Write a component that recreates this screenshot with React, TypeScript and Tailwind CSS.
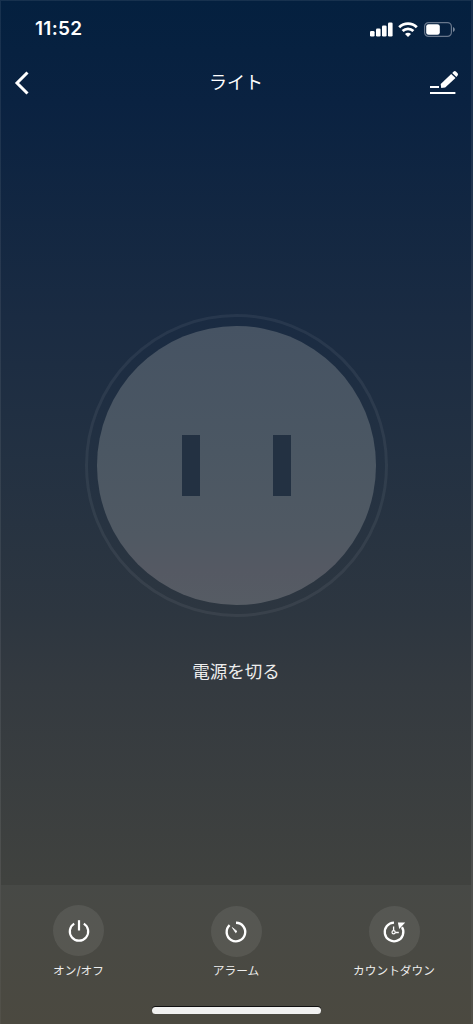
import React from 'react';

interface ActionProps {
  label: string;
  className: string;
  children: React.ReactNode;
}

const SignalIcon = () => (
  <svg width="23" height="15" viewBox="0 0 23 15" fill="currentColor">
    <rect x="0" y="9" width="4.6" height="5.5" rx="1.3" />
    <rect x="6" y="6.5" width="4.6" height="8" rx="1.3" />
    <rect x="12" y="3.5" width="4.6" height="11" rx="1.3" />
    <rect x="18" y="0.5" width="4.6" height="14" rx="1.3" />
  </svg>
);

const WifiIcon = () => (
  <svg width="20" height="15" viewBox="0 0 20 15" fill="none" stroke="currentColor" strokeWidth="2.8">
    <path d="M1.2 5.3a12.6 12.6 0 0 1 17.6 0" />
    <path d="M4.6 9a7.8 7.8 0 0 1 10.8 0" />
    <path d="M10 14.9l-3-3a4.2 4.2 0 0 1 6 0z" fill="currentColor" stroke="none" />
  </svg>
);

const BatteryIcon = () => (
  <svg width="31" height="15" viewBox="0 0 31 15" fill="none">
    <rect x="0.6" y="0.6" width="26.8" height="13.8" rx="4" stroke="#68778c" strokeWidth="1.2" />
    <rect x="2.2" y="2.2" width="13.6" height="10.6" rx="2.4" fill="white" />
    <path d="M29 5v5c1-.4 1.8-1.3 1.8-2.5S30 5.4 29 5z" fill="#7b889a" />
  </svg>
);

const EditIcon = () => (
  <svg width="30" height="27" viewBox="0 0 30 27" fill="white">
    <path d="M12.2 17.9l-.5-3.8L22.2 3.9l4.3 4.1L16.2 17.5z" />
    <path d="M23.2 3l1.5-1.5q1.1-.9 2.2.1l1.7 1.7q1 1.1 0 2.2l-1.2 1.5z" />
    <rect x="1" y="16" width="9" height="2" />
    <rect x="1" y="22" width="25.4" height="2" />
  </svg>
);

const PowerIcon = () => (
  <svg width="24" height="24" viewBox="0 0 24 24" fill="none" stroke="currentColor" strokeWidth="2.2">
    <path d="M7.2 4.6a9.2 9.2 0 1 0 9.6 0" />
    <path d="M12 1.2v10.3" />
  </svg>
);

const AlarmIcon = () => (
  <svg width="24" height="24" viewBox="0 0 24 24" fill="none" stroke="currentColor" strokeWidth="2.4">
    <path d="M12 2.7a9.3 9.3 0 1 1-6.4 2.5" />
    <path d="M8.3 7.5l4.7 3.9-1.3 1.3z" fill="currentColor" stroke="currentColor" strokeWidth="0.7" />
  </svg>
);

const CountdownIcon = () => (
  <svg width="24" height="24" viewBox="0 0 24 24" fill="none" stroke="currentColor" strokeWidth="2.3">
    <path d="M12 2.7A9.3 9.3 0 1 0 20 7.200" />
    <path d="M15.9 2.5h7.3L17.2 9z" fill="currentColor" stroke="none" />
    <circle cx="11.6" cy="12.2" r="1.6" strokeWidth="1.2" />
    <path d="M11.6 6.4v4.2M13.2 12.5h3.6" strokeWidth="1.3" />
  </svg>
);

const Action: React.FC<ActionProps> = ({ label, className, children }) => (
  <button className={`flex flex-col items-center text-white ${className}`}>
    <span className="flex h-[51px] w-[51px] items-center justify-center rounded-full bg-white/8">
      {children}
    </span>
    <span className="mt-auto whitespace-nowrap text-[11.7px] leading-4 text-[#ededed]">{label}</span>
  </button>
);

export default function App() {
  return (
    <div className="flex h-[1024px] w-[473px] flex-col overflow-hidden border-t border-r-2 border-l border-white/8 bg-[linear-gradient(180deg,#04203f_0%,#0a2241_10%,#1a2b42_31%,#233142_45%,#2d3640_60%,#343a40_67%,#40423f_86%,#444239_100%)] bg-origin-border font-['Inter','Noto_Sans_CJK_JP',sans-serif] text-white">
      {/* Status bar */}
      <div className="flex h-[56px] shrink-0 items-center justify-between pr-[16px] pl-[34px]">
        <span className="pt-px text-[19px] font-semibold tracking-[0.3px]">11:52</span>
        <div className="flex items-center">
          <SignalIcon />
          <span className="ml-[5px]"><WifiIcon /></span>
          <span className="ml-[6px]"><BatteryIcon /></span>
        </div>
      </div>

      {/* Header */}
      <header className="grid h-[52px] shrink-0 grid-cols-[1fr_auto_1fr] items-center pr-[12px] pl-[12px]">
        <button className="justify-self-start" aria-label="戻る">
          <svg width="16" height="24" viewBox="0 0 16 24" fill="none" stroke="white" strokeWidth="3">
            <path d="M14.5 1.5L4 12l10.5 10.5" />
          </svg>
        </button>
        <h1 className="text-[18px] leading-6">ライト</h1>
        <button className="justify-self-end pt-px" aria-label="編集"><EditIcon /></button>
      </header>

      {/* Outlet */}
      <main className="flex flex-1 flex-col items-center pt-[205px] pl-px">
        <div className="flex h-[303px] w-[303px] shrink-0 items-center justify-center rounded-full border-[3px] border-white/6">
          <div className="flex h-[279px] w-[279px] items-center justify-center gap-[73px] rounded-full bg-[linear-gradient(180deg,#465363,#4b5763_45%,#505963_75%,#555963_88%,#565c64)]">
            <span className="h-[61px] w-[18px] bg-[#233142]" />
            <span className="h-[61px] w-[18px] bg-[#233142]" />
          </div>
        </div>
        <p className="mt-[42px] pr-px text-[17.5px] leading-[26px] text-[#ededed]">電源を切る</p>
      </main>

      {/* Bottom actions */}
      <footer className="flex h-[139px] shrink-0 flex-col bg-white/4">
        <div className="flex h-[94px] justify-between pt-[20px]">
          <Action label="オン/オフ" className="w-[156px] pr-px"><PowerIcon /></Action>
          <Action label="アラーム" className="w-[156px] pt-px"><AlarmIcon /></Action>
          <Action label="カウントダウン" className="w-[156px] pt-px pl-[2px]"><CountdownIcon /></Action>
        </div>
        <div className="mt-auto mb-[10px] ml-px h-[7px] w-[169px] self-center rounded-full bg-[#f1f1f0] shadow-[0_-1px_0_#111111]" />
      </footer>
    </div>
  );
}
